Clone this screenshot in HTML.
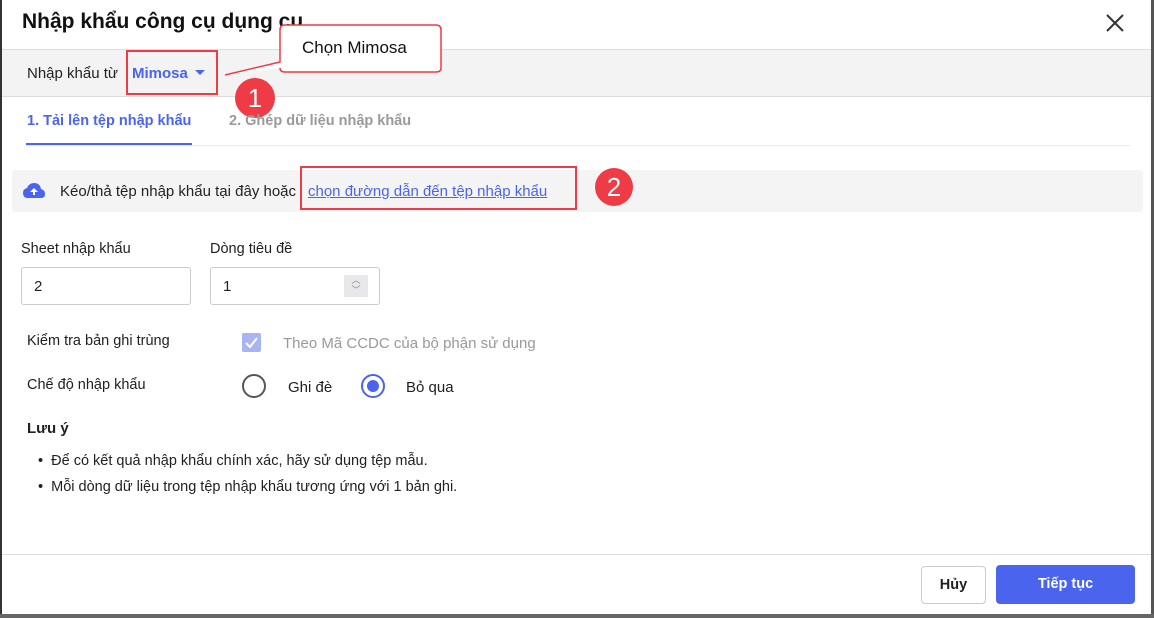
<!DOCTYPE html>
<html><head><meta charset="utf-8"><style>
*{box-sizing:border-box;margin:0;padding:0}
body{width:1154px;height:618px;overflow:hidden;background:#fff;font-family:"Liberation Sans",sans-serif;position:relative;color:#212121}
.a{position:absolute}
.t{font-size:15px}
</style></head><body>
<div class="a" style="left:0;top:0;width:2px;height:618px;background:#333"></div>
<div class="a" style="right:0;top:0;width:3px;height:618px;background:#555"></div>
<div class="a" style="left:0;bottom:0;width:1154px;height:4px;background:#666"></div>
<div class="a" style="left:22px;top:10px;font-size:21px;font-weight:bold;color:#111">Nhập khẩu công cụ dụng cụ</div>
<svg class="a" style="left:1105px;top:13px" width="20" height="20"><path d="M2 2L18 18M18 2L2 18" stroke="#333" stroke-width="2"/></svg>
<div class="a" style="left:2px;top:49px;width:1149px;height:48px;background:#f3f3f3;border-top:1px solid #ddd;border-bottom:1px solid #ddd"></div>
<div class="a t" style="left:27px;top:65px;color:#222">Nhập khẩu từ</div>
<div class="a t" style="left:132px;top:65px;color:#4a64ee;font-weight:bold">Mimosa</div>
<div class="a" style="left:195px;top:70px;border:5px solid transparent;border-top:5px solid #4a64ee"></div>
<div class="a" style="left:126px;top:50px;width:92px;height:45px;border:2px solid #ee3b45"></div>
<svg class="a" style="left:220px;top:22px" width="230" height="60"><path d="M5 53L60 40L60 8Q60 3 65 3L216 3Q221 3 221 8L221 46Q221 50 216 50L65 50Q60 50 60 46" fill="#fff" stroke="#ee3b45" stroke-width="1.5"/></svg>
<div class="a" style="left:302px;top:38px;font-size:17px;color:#111">Chọn Mimosa</div>
<div class="a" style="left:235px;top:78px;width:40px;height:40px;border-radius:50%;background:#ee3b45;color:#fff;font-size:26px;text-align:center;line-height:40px">1</div>
<div class="a" style="left:27px;top:113px;font-size:14.5px;font-weight:bold;color:#4a64ee">1. Tải lên tệp nhập khẩu</div>
<div class="a" style="left:229px;top:113px;font-size:14.5px;font-weight:bold;color:#9a9a9a">2. Ghép dữ liệu nhập khẩu</div>
<div class="a" style="left:26px;top:145px;width:1104px;height:1px;background:#e8e8e8"></div>
<div class="a" style="left:26px;top:143px;width:166px;height:2px;background:#4a64ee"></div>
<div class="a" style="left:12px;top:170px;width:1131px;height:42px;background:#f4f4f5;border-radius:3px"></div>
<svg class="a" style="left:22px;top:182px" width="24" height="18"><path d="M6 16Q1 16 1 11Q1 7 5 6Q7 1 12 1Q18 1 19 7Q23 8 23 12Q23 16 19 16Z" fill="#4a64ee"/><path d="M12 6L8 10H11V13H13V10H16Z" fill="#fff"/></svg>
<div class="a t" style="left:60px;top:183px;color:#222">Kéo/thả tệp nhập khẩu tại đây hoặc</div>
<div class="a t" style="left:308px;top:183px;color:#4a64ee;text-decoration:underline">chọn đường dẫn đến tệp nhập khẩu</div>
<div class="a" style="left:300px;top:166px;width:277px;height:44px;border:2px solid #ee3b45"></div>
<div class="a" style="left:595px;top:168px;width:38px;height:38px;border-radius:50%;background:#ee3b45;color:#fff;font-size:26px;text-align:center;line-height:38px">2</div>
<div class="a" style="left:21px;top:241px;font-size:14.5px">Sheet nhập khẩu</div>
<div class="a" style="left:210px;top:241px;font-size:14.5px">Dòng tiêu đề</div>
<div class="a" style="left:21px;top:267px;width:170px;height:38px;border:1px solid #ccc;border-radius:3px;padding:10px 12px;font-size:15px">2</div>
<div class="a" style="left:210px;top:267px;width:170px;height:38px;border:1px solid #ccc;border-radius:3px;padding:10px 12px;font-size:15px">1</div>
<div class="a" style="left:344px;top:275px;width:24px;height:22px;background:#e8e8ea;color:#888;font-size:9px;text-align:center;line-height:10px">︿<br>﹀</div>
<div class="a" style="left:27px;top:333px;font-size:14.5px">Kiểm tra bản ghi trùng</div>
<div class="a" style="left:242px;top:333px;width:19px;height:19px;background:#a8b4f4;border-radius:2px"></div>
<svg class="a" style="left:242px;top:333px" width="19" height="19"><path d="M4 10L8 14L15 5" stroke="#fff" stroke-width="2" fill="none"/></svg>
<div class="a t" style="left:283px;top:335px;color:#999">Theo Mã CCDC của bộ phận sử dụng</div>
<div class="a" style="left:27px;top:377px;font-size:14.5px">Chế độ nhập khẩu</div>
<div class="a" style="left:242px;top:374px;width:24px;height:24px;border:2px solid #555;border-radius:50%"></div>
<div class="a t" style="left:288px;top:379px">Ghi đè</div>
<div class="a" style="left:361px;top:374px;width:24px;height:24px;border:2px solid #4a64ee;border-radius:50%"></div>
<div class="a" style="left:367px;top:380px;width:12px;height:12px;background:#4a64ee;border-radius:50%"></div>
<div class="a t" style="left:406px;top:379px">Bỏ qua</div>
<div class="a" style="left:27px;top:420px;font-size:15px;font-weight:bold">Lưu ý</div>
<div class="a" style="left:38px;top:448px;font-size:14.5px;line-height:26px">• &nbsp;Để có kết quả nhập khẩu chính xác, hãy sử dụng tệp mẫu.<br>• &nbsp;Mỗi dòng dữ liệu trong tệp nhập khẩu tương ứng với 1 bản ghi.</div>
<div class="a" style="left:2px;top:554px;width:1149px;height:1px;background:#ddd"></div>
<div class="a" style="left:921px;top:566px;width:65px;height:38px;border:1px solid #ccc;border-radius:4px;text-align:center;line-height:36px;font-size:14.5px;font-weight:bold">Hủy</div>
<div class="a" style="left:996px;top:565px;width:139px;height:39px;background:#4a64ee;border-radius:4px;text-align:center;line-height:39px;font-size:14.5px;font-weight:bold;color:#fff">Tiếp tục</div>
</body></html>
